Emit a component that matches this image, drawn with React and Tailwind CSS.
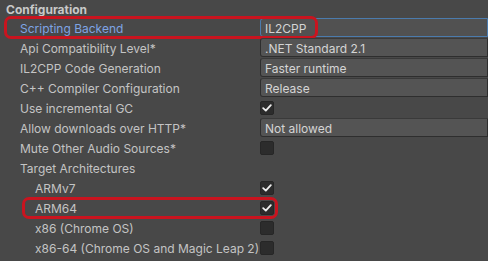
const rows = [
  { label: "Scripting Backend", kind: "field", value: "IL2CPP", focus: true, mark: "wide" },
  { label: "Api Compatibility Level*", kind: "field", value: ".NET Standard 2.1" },
  { label: "IL2CPP Code Generation", kind: "field", value: "Faster runtime" },
  { label: "C++ Compiler Configuration", kind: "field", value: "Release" },
  { label: "Use incremental GC", kind: "check", checked: true },
  { label: "Allow downloads over HTTP*", kind: "field", value: "Not allowed" },
  { label: "Mute Other Audio Sources*", kind: "check", checked: false },
  { label: "Target Architectures", kind: "none" },
  { label: "ARMv7", kind: "check", checked: true, indent: true },
  { label: "ARM64", kind: "check", checked: true, indent: true, mark: "short" },
  { label: "x86 (Chrome OS)", kind: "check", checked: false, indent: true },
  { label: "x86-64 (Chrome OS and Magic Leap 2)", kind: "check", checked: false, indent: true },
];

function Check({ checked }) {
  return (
    <div className="flex h-[14px] w-[14px] items-center justify-center rounded-[2px] border border-[#262626] bg-[#2c2c2c]">
      {checked ? (
        <svg width="10" height="8" viewBox="0 0 10 8" fill="none">
          <path d="M1.2 4.2 L3.8 6.6 L8.8 1.2" stroke="#eeeeee" strokeWidth="1.8" strokeLinecap="round" strokeLinejoin="round" />
        </svg>
      ) : null}
    </div>
  );
}

function Row({ row }) {
  return (
    <div className="relative flex h-[20px] items-start">
      <div className={`flex h-[19px] w-[260px] shrink-0 items-center pt-[2px] ${row.indent ? "pl-[35px]" : "pl-[20px]"} ${row.focus ? "text-[#7ea4e4]" : "text-[#c4c4c4]"}`}>
        {row.label}
      </div>
      {row.kind === "field" ? (
        <div className={`flex h-[19px] flex-1 items-center rounded-l-[3px] border pl-[4px] pt-[2px] text-[#d4d4d4] ${row.focus ? "border-[#4b7bad] bg-[#515151]" : "border-[#2e2e2e] border-t-[#3a3a3a] bg-[#545454]"}`}>
          {row.value}
        </div>
      ) : null}
      {row.kind === "check" ? (
        <div className="flex h-[19px] items-center">
          <Check checked={row.checked} />
        </div>
      ) : null}
      {row.mark === "wide" ? (
        <div className="pointer-events-none absolute left-[4px] top-[-2px] h-[23px] w-[314px] rounded-[7px] border-[3px] border-[#c9141f]" />
      ) : null}
      {row.mark === "short" ? (
        <div className="pointer-events-none absolute left-[22px] top-[-1px] h-[22px] w-[256px] rounded-[7px] border-[3px] border-[#c9141f]" />
      ) : null}
    </div>
  );
}

export default function App() {
  return (
    <div className="h-[261px] w-[488px] overflow-hidden bg-[#484848] text-[12px] font-['Inter','Roboto',sans-serif]">
      <div className="flex h-[18px] items-center pl-[6px] pt-[1px] font-bold text-[#c8c8c8]">Configuration</div>
      {rows.map((row) => (
        <Row key={row.label} row={row} />
      ))}
    </div>
  );
}
